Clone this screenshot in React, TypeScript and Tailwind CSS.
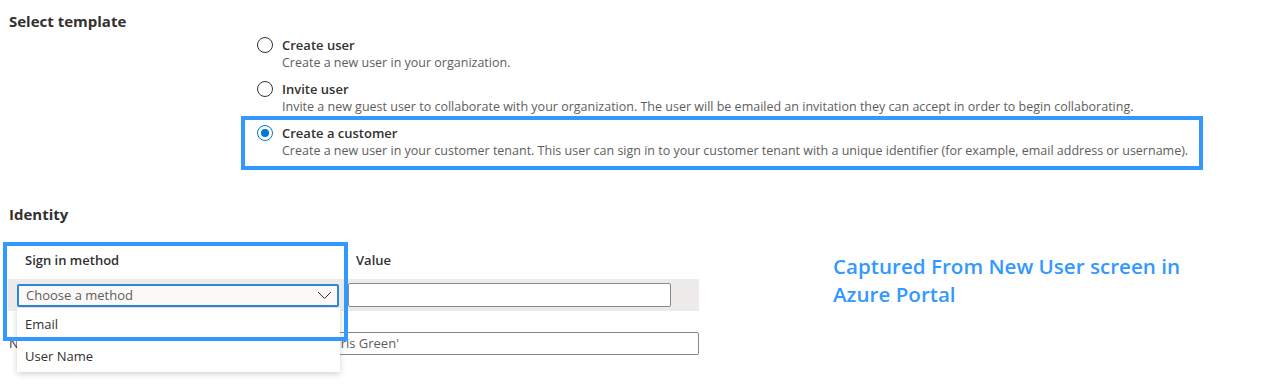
const options = [
  {
    title: "Create user",
    description: "Create a new user in your organization.",
    selected: false,
  },
  {
    title: "Invite user",
    description:
      "Invite a new guest user to collaborate with your organization. The user will be emailed an invitation they can accept in order to begin collaborating.",
    selected: false,
  },
]

function Radio({ checked }: { checked?: boolean }) {
  return (
    <span
      className={`flex h-[16px] w-[16px] shrink-0 items-center justify-center rounded-full border ${
        checked ? "border-[#0078d4]" : "border-[#323130]"
      }`}
    >
      {checked && <span className="h-[8px] w-[8px] rounded-full bg-[#0078d4]" />}
    </span>
  )
}

function Option({ title, description, checked }: { title: string; description: string; checked?: boolean }) {
  return (
    <div>
      <div className="flex items-center gap-[9px]">
        <Radio checked={checked} />
        <span className="text-[13px] font-semibold leading-[18px] text-[#323130]">{title}</span>
      </div>
      <div className="pl-[25px] text-[12.5px] leading-[18px] text-[#605e5c]">{description}</div>
    </div>
  )
}

export default function App() {
  return (
    <div className="relative h-[389px] w-[1266px] overflow-hidden bg-white font-['Segoe_UI','Open_Sans',sans-serif] text-[#323130]">
      {/* Select template */}
      <div className="pl-[9px] pt-[12px] text-[15px] font-bold leading-[18px]">Select template</div>

      <div className="ml-[241px] mt-[6px] w-[962px]">
        <div className="flex flex-col gap-[8px] pl-[16px]">
          {options.map((o) => (
            <Option key={o.title} title={o.title} description={o.description} checked={o.selected} />
          ))}
        </div>
        <div className="border-[4px] border-[#3399ff] pb-[6px] pl-[12px] pt-[4px]">
          <Option
            title="Create a customer"
            description="Create a new user in your customer tenant. This user can sign in to your customer tenant with a unique identifier (for example, email address or username)."
            checked
          />
        </div>
      </div>

      {/* Identity */}
      <div className="mt-[35px] pl-[9px] text-[15px] font-bold leading-[18px]">Identity</div>

      <div className="mt-[28px] flex">
        <div className="w-[699px] pl-[8px]">
          <div className="flex text-[13px] font-semibold leading-[18px]">
            <span className="w-[348px] pl-[17px]">Sign in method</span>
            <span>Value</span>
          </div>
          <div className="mt-[10px] flex h-[32px] items-center gap-[9px] bg-[#edebe9] pl-[9px]">
            <div className="flex h-[23px] w-[322px] items-center justify-between rounded-[2px] border-2 border-[#2b88d8] bg-[#faf9f8] pl-[7px] pr-[5px] pt-[1px] text-[13px] text-[#605e5c]">
              <span>Choose a method</span>
              <svg width="15" height="9" viewBox="0 0 15 9" fill="none" stroke="#323130" strokeWidth="1">
                <polyline points="1,1 7.5,7.5 14,1" />
              </svg>
            </div>
            <div className="h-[24px] w-[323px] rounded-[2px] border border-[#8a8886] bg-white" />
          </div>
          <div className="mt-[21px] flex h-[23px] items-center">
            <span className="w-[160px] pl-[1px] text-[13px] text-[#323130]">Name</span>
            <div className="flex h-[23px] flex-1 items-center rounded-[2px] border border-[#8a8886] pl-[94px] text-[13px] text-[#605e5c]">
              Example: 'Chris Green'
            </div>
          </div>
        </div>
        <div className="ml-[134px] mt-[1px] text-[20.6px] font-semibold leading-[28px] text-[#3399ff]">
          Captured From New User screen in
          <br />
          Azure Portal
        </div>
      </div>

      {/* dropdown menu */}
      <div className="absolute left-[17px] top-[308px] w-[323px] bg-white text-[13px] text-[#323130] shadow-[0_2px_6px_rgba(0,0,0,0.18)]">
        <div className="flex h-[32px] items-center pl-[8px] pt-[1px]">Email</div>
        <div className="flex h-[32px] items-center pl-[8px] pt-[1px]">User Name</div>
      </div>

      {/* annotation box */}
      <div className="pointer-events-none absolute left-[3px] top-[242px] h-[99px] w-[345px] border-[4px] border-[#3399ff]" />
    </div>
  )
}
